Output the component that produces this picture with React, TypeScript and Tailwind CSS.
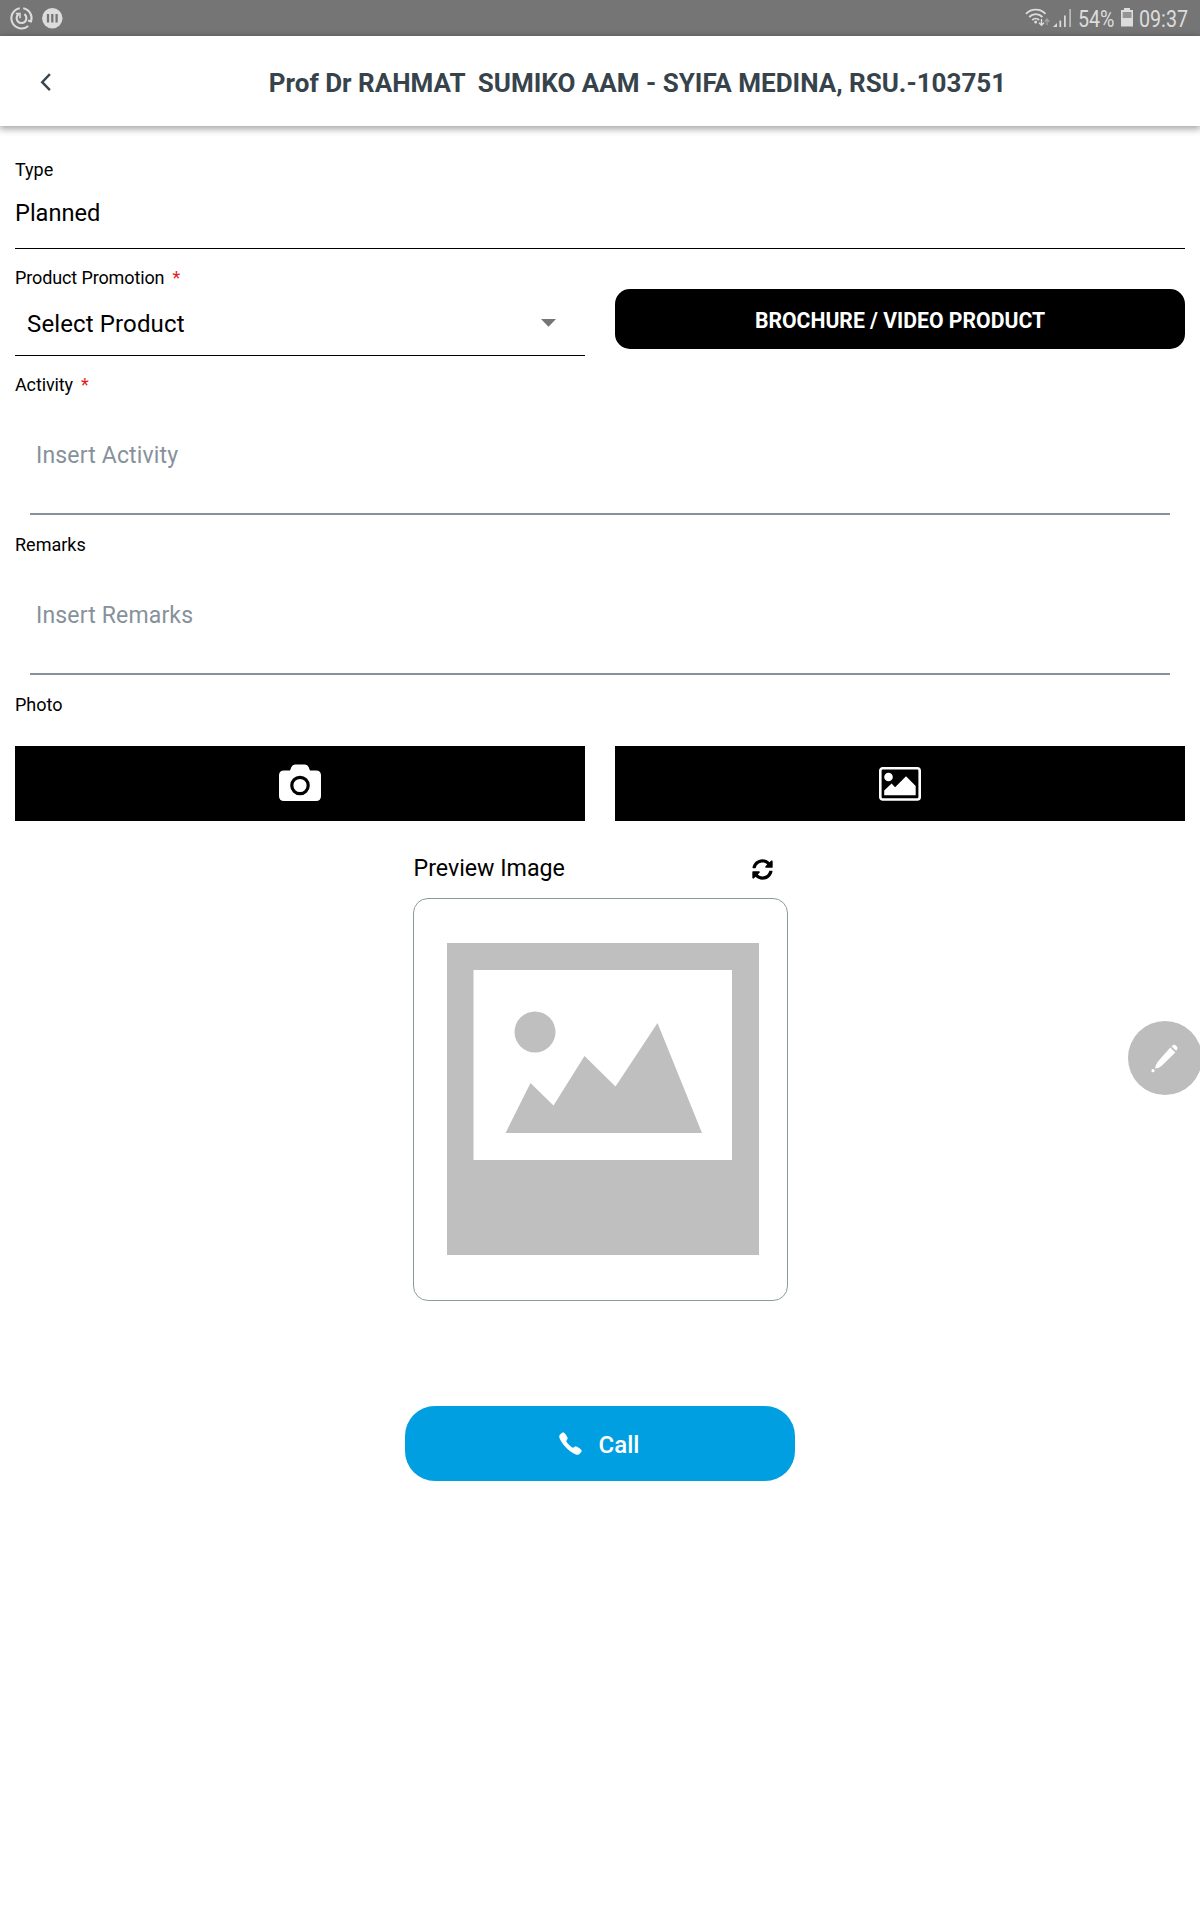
import React from 'react';
import { FaSyncAlt } from 'react-icons/fa';
import { IoIosCall } from 'react-icons/io';

function StatusBar() {
  return (
    <div className="flex h-9 shrink-0 items-center justify-between bg-[#757575] text-[#dcdcdc]">
      <svg width="70" height="36" viewBox="0 0 70 36" fill="none">
        <path d="M19.800 8.200a10.200 10.200 0 1 0 8.400 17.800M23.200 8.200a10.200 10.200 0 0 1 7.800 13.300l-3-1" stroke="#dcdcdc" strokeWidth="2.100" />
        <path d="M18.600 14.200a4.900 4.900 0 1 0 5.800 0" stroke="#dcdcdc" strokeWidth="2.100" />
        <path d="M15.800 13.600h4.200v4.600" stroke="#dcdcdc" strokeWidth="1.500" />
        <circle cx="52.300" cy="18.300" r="10.200" fill="#dcdcdc" />
        <path d="M48 14v8.600M52.300 14v8.600M56.600 14v8.600" stroke="#757575" strokeWidth="2.300" />
      </svg>
      <div className="flex h-9 items-center">
        <svg width="54" height="36" viewBox="1024 0 54 36" fill="none">
          <g stroke="#dcdcdc" strokeWidth="1.800">
            <path d="M1026 13.800a13.500 13.500 0 0 1 19.500 0" />
            <path d="M1029.200 17a9.200 9.200 0 0 1 13.200 0" />
            <path d="M1032.300 20a5 5 0 0 1 6.800 0" />
            <path d="M1041.500 19v6M1039 22.700l2.500 2.600 2.500-2.600" strokeWidth="1.400" />
            <path d="M1047 25v-5.500M1044.700 21.700l2.300-2.600 2.300 2.600" strokeWidth="1.300" opacity=".45" />
          </g>
          <circle cx="1035.700" cy="22" r="1.500" fill="#dcdcdc" />
          <path d="M1053 27l4-4v4z" fill="#dcdcdc" />
          <path d="M1060.300 27v-6.500M1064.900 27V15.500" stroke="#dcdcdc" strokeWidth="1.700" />
          <path d="M1070.100 27V9" stroke="#c4c4c4" strokeWidth="1.500" />
        </svg>
        <div className="w-[43px] pt-0.5 font-['Roboto'] text-2xl leading-9"><span className="inline-block origin-left scale-x-[0.82]">54%</span></div>
        <svg width="18" height="36" viewBox="1121 0 18 36">
          <path d="M1124 8h6v2h3v16.500h-12V10h3z" fill="#dcdcdc" />
          <path d="M1122.700 12h8.800v6h-8.800z" fill="#949494" />
        </svg>
        <div className="w-[61px] pt-0.5 font-['Roboto'] text-2xl leading-9"><span className="inline-block origin-left scale-x-[0.82]">09:37</span></div>
      </div>
    </div>
  );
}

function Header() {
  return (
    <header className="grid h-[90px] shrink-0 grid-cols-[76px_1fr_76px] items-center shadow-[0_2px_7px_1px_rgba(0,0,0,0.36)]">
      <svg className="ml-[38px] mt-0.5" width="16" height="20" viewBox="0 0 16 20" fill="none">
        <path d="M11.900 2.200L4.200 10.200l7.700 8" stroke="#37474f" strokeWidth="2.400" />
      </svg>
      <h1 className="whitespace-pre pl-[75px] pt-1 text-center text-[26px] font-bold leading-9 text-[#37434b]">Prof Dr RAHMAT  SUMIKO AAM - SYIFA MEDINA, RSU.-103751</h1>
    </header>
  );
}

function Label({ text, required = false }: { text: string; required?: boolean }) {
  return (
    <div className="flex h-6 gap-2 text-lg leading-6">
      <span className={required ? 'tracking-[-0.120px]' : ''}>{text}</span>
      {required && <span className="text-[#e51c1c]">*</span>}
    </div>
  );
}

function TextInput({ placeholder }: { placeholder: string }) {
  return (
    <div className="mx-[15px] mb-[18px] h-[118px] border-b-2 border-[#87919b] pl-1.5 pt-[43px]">
      <div className="text-[23px] leading-8 tracking-[0.160px] text-[#87919b]">{placeholder}</div>
    </div>
  );
}

function CameraIcon() {
  return (
    <svg className="mb-0.5" width="42" height="38" viewBox="0 0 42 38">
      <path d="M5 6.500h6l1.400-3.400Q13.400.5 16 .5h10q2.600 0 3.600 2.600L31 6.500h6q5 0 5 5V32q0 5-5 5H5q-5 0-5-5V11.500q0-5 5-5z" fill="#fff" />
      <circle cx="21" cy="21.500" r="8.200" fill="none" stroke="#000" strokeWidth="3.200" />
    </svg>
  );
}

function PictureIcon() {
  return (
    <svg width="42" height="34" viewBox="0 0 42 34">
      <rect x="1.300" y="1.300" width="39.400" height="31.200" rx="2.500" fill="none" stroke="#fff" strokeWidth="2.600" />
      <circle cx="9.500" cy="10" r="4.300" fill="#fff" />
      <path d="M5.200 28.300v-4.700l7.400-7 3.500 3.600L27 9.300l9.700 9.600v9.400z" fill="#fff" />
    </svg>
  );
}

function Preview() {
  return (
    <section className="mx-auto mt-[31px] w-[375px]">
      <div className="flex h-8 items-center justify-between pr-[15px]">
        <span className="pl-px text-[23.200px] leading-8">Preview Image</span>
        <FaSyncAlt size={21} className="mt-[3px]" />
      </div>
      <div className="mt-[14px] h-[403px] rounded-[15px] border border-[#8c9c9e] pl-[33px] pt-11">
        <svg width="312" height="312" viewBox="0 0 312 312">
          <path d="M0 0h312v312H0z" fill="#bfbfbf" />
          <path d="M26.500 27h258.500v190H26.500z" fill="#fff" />
          <circle cx="88" cy="89" r="20.500" fill="#bfbfbf" />
          <path d="M58.500 190L83.500 140l23 22.500 31-49.500 31 30.500 42-63.500 44.500 110z" fill="#bfbfbf" />
        </svg>
      </div>
    </section>
  );
}

export default function App() {
  return (
    <div className="relative flex h-[1920px] w-[1200px] flex-col overflow-hidden bg-white font-['Roboto',sans-serif] text-black">
      <StatusBar />
      <Header />
      <main className="flex flex-col px-[15px] pt-8">
        <Label text="Type" />
        <div className="mt-[15px] border-b border-black pb-[19px] text-[23.600px] leading-8">Planned</div>
        <div className="mt-[17px] grid grid-cols-2 gap-[30px]">
          <div className="h-[90px] border-b border-black">
            <Label text="Product Promotion" required />
            <div className="mt-[18px] flex items-center justify-between pl-3 pr-[29px]">
              <span className="text-2xl leading-8 tracking-[0.130px]">Select Product</span>
              <svg className="mb-0.5" width="15" height="8" viewBox="0 0 15 8"><path d="M0 0h15L7.500 7.800z" fill="#757575" /></svg>
            </div>
          </div>
          <button className="mt-[23px] h-[60px] rounded-[15px] bg-black pt-1 text-[21.200px] font-bold leading-8 text-white">BROCHURE / VIDEO PRODUCT</button>
        </div>
        <div className="mt-[17px]">
          <Label text="Activity" required />
        </div>
        <TextInput placeholder="Insert Activity" />
        <Label text="Remarks" />
        <TextInput placeholder="Insert Remarks" />
        <Label text="Photo" />
        <div className="mt-[29px] grid h-[75px] grid-cols-2 gap-[30px]">
          <button className="flex items-center justify-center bg-black"><CameraIcon /></button>
          <button className="flex items-center justify-center bg-black"><PictureIcon /></button>
        </div>
        <Preview />
        <button className="mx-auto mt-[105px] flex h-[75px] w-[390px] items-center justify-center gap-[14px] rounded-[30px] bg-[#009fe1] pr-[5px] text-white">
          <IoIosCall size={29} stroke="#fff" strokeWidth={12} />
          <span className="pt-0.5 text-2xl font-medium leading-8">Call</span>
        </button>
      </main>
      <button className="absolute left-[1128px] top-[1021px] flex size-[74px] items-center justify-center rounded-full bg-[#bdbdbd]">
        <svg width="30" height="30" viewBox="0 0 30 30" fill="#fff">
          <path d="M20.300 4.500l5 5L11.500 23q-3.500 2.600-6.500 2.600.4-3.500 3-7z" />
          <path d="M21.500 3.500l1.600-1.500q1.500-.8 3.300.9t1 3.200l-1.200 1.700z" />
          <circle cx="3" cy="27.700" r="1.600" />
        </svg>
      </button>
    </div>
  );
}
